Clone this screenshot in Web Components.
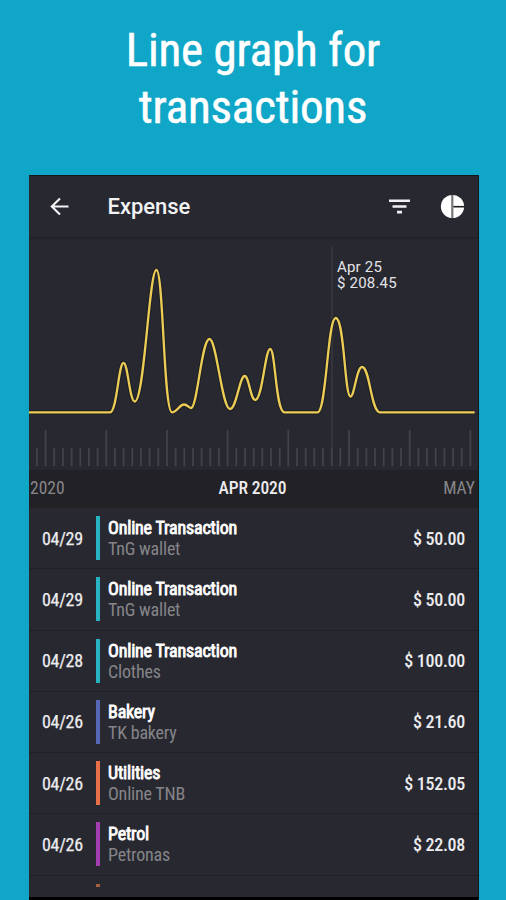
<!DOCTYPE html>
<html lang="en">
<head>
<meta charset="utf-8">
<title>Expense</title>
<style>
  html, body { margin: 0; height: 100%; overflow: hidden; background: #10a6c7; }
</style>
</head>
<body>
<promo-page>
  <span slot="title">Line graph for<br>transactions</span>
  <app-bar>Expense</app-bar>
  <line-graph>Apr 25<br>$ 208.45</line-graph>
  <month-picker>
    <span slot="prev">2020</span>
    <span slot="current">APR 2020</span>
    <span slot="next">MAY</span>
  </month-picker>
  <transaction-list></transaction-list>
</promo-page>

<script>
/**
 * Creates a template from a string of markup
 * @param {string} html
 */
const makeTemplate = (html) => {
  const template = document.createElement('template')
  template.innerHTML = html
  return template
}

/** Base class that clones a template into an open shadow root */
class BaseElement extends HTMLElement {
  constructor() {
    super()
    this.attachShadow({ mode: 'open' })
    this.shadowRoot.appendChild(this.constructor.template.content.cloneNode(true))
  }
}

class PromoPage extends BaseElement {
  static template = makeTemplate(`
    <style>
      :host {
        display: flex;
        flex-direction: column;
        width: 506px;
        height: 900px;
        overflow: hidden;
        background: #10a6c7;
        font-family: Roboto, sans-serif;
        color: #ececef;
      }
      h1 {
        margin: 0;
        padding-top: 22px;
        height: 153px;
        font-size: 47px;
        font-weight: 400;
        font-stretch: 75%;
        line-height: 56.5px;
        letter-spacing: -.2px;
        text-align: center;
        color: #fff;
        -webkit-text-stroke: .5px #fff;
      }
      main {
        flex: 1;
        display: flex;
        flex-direction: column;
        box-sizing: border-box;
        width: 450px;
        min-height: 0;
        margin-left: 29px;
        border: solid #17171b;
        border-width: 1px 1px 0 0;
        background: #282830;
        overflow: hidden;
      }
      footer { flex: none; height: 3px; background: #000; }
      .body { flex: 1; min-height: 0; overflow: hidden; }
    </style>
    <h1><slot name="title"></slot></h1>
    <main>
      <div class="body"><slot></slot></div>
      <footer></footer>
    </main>
  `)
}

class AppBar extends BaseElement {
  static template = makeTemplate(`
    <style>
      :host {
        display: flex;
        align-items: center;
        box-sizing: border-box;
        height: 63px;
        padding: 0 13px 0 18px;
        border-bottom: 2px solid #222227;
      }
      svg { display: block; flex: none; }
      .label {
        flex: 1;
        padding-left: 35.5px;
        font-size: 22px;
        font-weight: 500;
        letter-spacing: -.05px;
        color: #f2f2f4;
      }
      .filter { margin-right: 29.5px; }
    </style>
    <svg width="25" height="24" viewBox="0 0 25 24" fill="none" stroke="#f4f4f6" stroke-width="2.1">
      <path d="M21.5 11.5H5M13 3.4 4.8 11.5l8.2 8.1"/>
    </svg>
    <span class="label"><slot></slot></span>
    <svg class="filter" width="24" height="24" viewBox="0 0 24 24" fill="#f0eff3">
      <path d="M2 4.5h21v2.5H2zM5.5 10.2h14v2.5h-14zM10 15.7h5v2.7h-5z"/>
    </svg>
    <svg width="25" height="26" viewBox="0 0 25 26">
      <circle cx="12.5" cy="12.5" r="11.6" fill="#fff"/>
      <path d="M12.3.9v23.2" stroke="#77777b" stroke-width="2.2"/>
      <path d="M13.4 12.7H25" stroke="#1d1d22" stroke-width="1.6"/>
    </svg>
  `)
}

class LineGraph extends BaseElement {
  static template = makeTemplate(`
    <style>
      :host { display: block; position: relative; height: 231px; }
      svg { display: block; }
      .marker {
        position: absolute;
        left: 308px;
        top: 20px;
        font-size: 15px;
        line-height: 16px;
        letter-spacing: .2px;
        white-space: nowrap;
        color: #e4e4e8;
      }
    </style>
    <svg width="449" height="231" viewBox="29 239 449 231" fill="none">
      <path d="M332 247V466" stroke="#38383e" stroke-width="1.6"/>
      <g id="ticks" stroke="#424248" stroke-width="1.8"></g>
      <path stroke="#15151c" stroke-opacity=".5" stroke-width="4.5"/>
      <path stroke="#ebcc55" stroke-width="2.3" stroke-linejoin="round"/>
    </svg>
    <div class="marker"><slot></slot></div>
  `)

  constructor() {
    super()
    const line = `M29 412.3H110
      C117 412.3 118.5 363 123.5 363 C128 363 129.5 401.5 134.8 401.5
      C144.5 401.5 149 270 156.4 270
      C163.5 270 163.5 412.3 172 412.3
      C177 412.3 179.5 404.5 184 404.5
      C187.5 404.5 188.5 408 191 408
      C197.5 408 201.5 339 209.5 339
      C216.5 339 222 409 230 409
      C236.5 409 239.5 376 244.7 376
      C249 376 250.5 400 255.2 400
      C262.5 400 265 349 270.2 349
      C275.5 349 275.5 412.3 284.5 412.3
      H317.5 C326.5 412.3 327.5 318 335.7 318
      C344.5 318 344.5 396.5 350.5 396.5
      C354.5 396.5 356.5 367 362 367
      C370 367 371 412.3 380 412.3 H474.7`
    this.shadowRoot
      .querySelectorAll('svg > path:not(:first-child)')
      .forEach((path) => path.setAttribute('d', line))

    // one tick a day, a long one each week
    let ticks = ''
    for (let day = 0; day <= 50; day++) {
      const x = (36.9 + day * 8.67).toFixed(1)
      ticks += `<path d="M${x} ${day % 7 === 1 ? 430 : 448}V466"/>`
    }
    this.shadowRoot.querySelector('#ticks').innerHTML = ticks
  }
}

class MonthPicker extends BaseElement {
  static template = makeTemplate(`
    <style>
      :host {
        display: grid;
        grid-template-columns: 1fr auto 1fr;
        align-items: center;
        box-sizing: border-box;
        height: 38px;
        padding: 0 3px 2px 1px;
        background: #222226;
        font-size: 17.5px;
        font-stretch: 75%;
        color: #87878b;
      }
      .current { font-weight: 500; letter-spacing: -.1px; color: #ededf0; }
      .next { text-align: right; }
    </style>
    <span><slot name="prev"></slot></span>
    <span class="current"><slot name="current"></slot></span>
    <span class="next"><slot name="next"></slot></span>
  `)
}

class TransactionRow extends BaseElement {
  static template = makeTemplate(`
    <style>
      :host {
        display: flex;
        align-items: center;
        box-sizing: border-box;
        height: 61.25px;
        padding: 0 13px 0;
        border-bottom: 1px solid #202025;
        font-size: 18px;
        font-stretch: 75%;
        line-height: 21px;
      }
      .date { width: 54px; letter-spacing: -.3px; -webkit-text-stroke: .25px; }
      .bar { width: 4px; height: 44px; background: var(--category); }
      .text { flex: 1; padding-left: 8px; }
      .name { letter-spacing: -.18px; color: #fff; -webkit-text-stroke: .8px #fff; }
      .note { letter-spacing: -.2px; color: #858589; }
      .amount { letter-spacing: -.3px; font-weight: 500; }
    </style>
    <div class="date"><slot name="date"></slot></div>
    <div class="bar"></div>
    <div class="text">
      <div class="name"><slot name="name"></slot></div>
      <div class="note"><slot name="note"></slot></div>
    </div>
    <div class="amount"><slot name="amount"></slot></div>
  `)
}

const transactions = [
  ['04/29', 'Online Transaction', 'TnG wallet', '$ 50.00', '#28b3c3'],
  ['04/29', 'Online Transaction', 'TnG wallet', '$ 50.00', '#28b3c3'],
  ['04/28', 'Online Transaction', 'Clothes', '$ 100.00', '#28b3c3'],
  ['04/26', 'Bakery', 'TK bakery', '$ 21.60', '#5667b6'],
  ['04/26', 'Utilities', 'Online TNB', '$ 152.05', '#e96f48'],
  ['04/26', 'Petrol', 'Petronas', '$ 22.08', '#a43db0']
]

class TransactionList extends BaseElement {
  static template = makeTemplate(`
    <style>
      :host { display: block; }
      .more { width: 4px; height: 3px; margin: 8px 0 0 67px; background: #a9603f; }
    </style>
    <div id="rows"></div>
    <div class="more"></div>
  `)

  constructor() {
    super()
    this.shadowRoot.querySelector('#rows').innerHTML = transactions
      .map(([date, name, note, amount, color]) => `
        <transaction-row style="--category: ${color}">
          <span slot="date">${date}</span>
          <span slot="name">${name}</span>
          <span slot="note">${note}</span>
          <span slot="amount">${amount}</span>
        </transaction-row>`)
      .join('')
  }
}

customElements.define('promo-page', PromoPage)
customElements.define('app-bar', AppBar)
customElements.define('line-graph', LineGraph)
customElements.define('month-picker', MonthPicker)
customElements.define('transaction-row', TransactionRow)
customElements.define('transaction-list', TransactionList)
</script>
</body>
</html>
